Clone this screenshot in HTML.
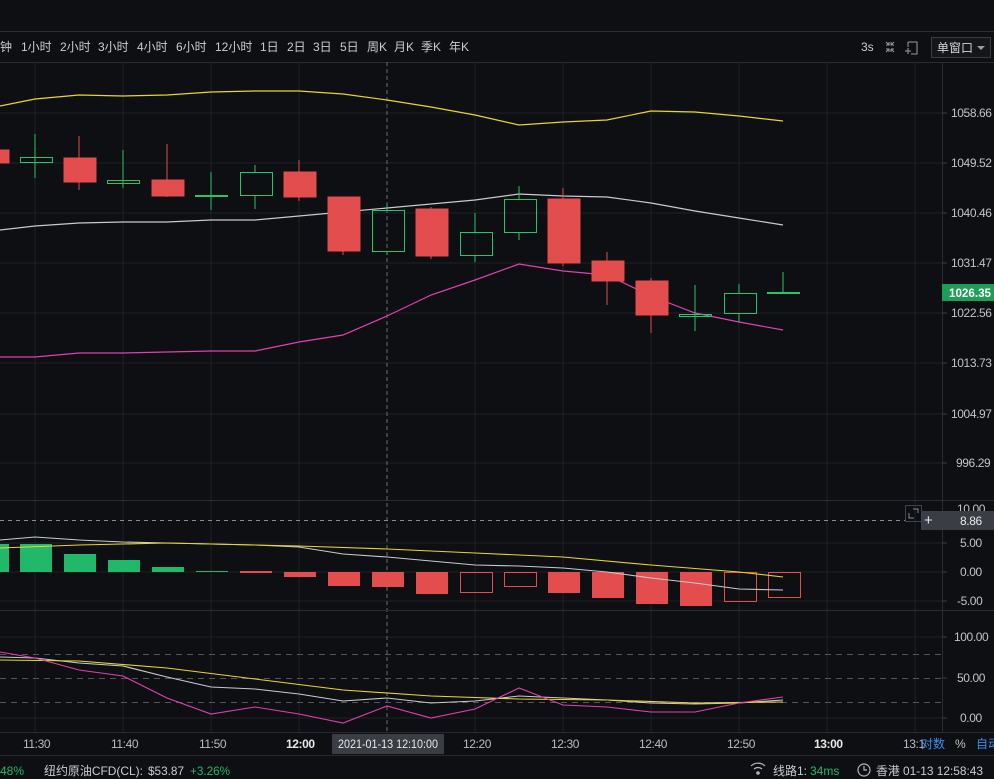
<!DOCTYPE html>
<html><head><meta charset="utf-8"><style>
body{margin:0;width:994px;height:779px;background:#0e0f12;overflow:hidden;font-family:"Liberation Sans","Noto Sans CJK SC",sans-serif;}
svg{position:absolute;left:0;top:0}
text{font-family:"Liberation Sans","Noto Sans CJK SC",sans-serif}
.ax text{letter-spacing:-0.4px}
</style></head><body>
<svg width="994" height="779" viewBox="0 0 994 779">
<rect width="994" height="779" fill="#0e0f12"/>
<line x1="0" y1="31.5" x2="994" y2="31.5" stroke="#2a2c31"/>
<line x1="0" y1="62.5" x2="994" y2="62.5" stroke="#2a2c31"/>
<g fill="#c9ccd1" font-size="12">
<text x="0" y="51">钟</text><text x="21" y="51">1小时</text><text x="60" y="51">2小时</text><text x="98" y="51">3小时</text><text x="137" y="51">4小时</text><text x="176" y="51">6小时</text><text x="215" y="51">12小时</text><text x="260" y="51">1日</text><text x="287" y="51">2日</text><text x="313" y="51">3日</text><text x="340" y="51">5日</text><text x="367" y="51">周K</text><text x="394" y="51">月K</text><text x="421" y="51">季K</text><text x="449" y="51">年K</text>
<text x="861" y="51">3s</text>
</g>
<g stroke="#9a9da3" fill="none" stroke-width="1">
<path d="M886 42l3 3M889 42v3h-3M894 42l-3 3M891 42v3h3M886 52l3-3M886 49h3v3M894 52l-3-3M891 49v3M891 49h3"/>
<path d="M908 42h9v12h-6M908 42v5M905 51h6M908 48v6"/>
</g>
<rect x="931.5" y="37.5" width="59" height="20" fill="#15161a" stroke="#3a3c42"/>
<text x="937" y="52" fill="#d4d6da" font-size="12">单窗口</text>
<path d="M977 46l4 4 4-4z" fill="#9a9da3"/>
<g stroke="#1e2025">
<path d="M35 62V732M123 62V732M211 62V732M299 62V732M475 62V732M563 62V732M651 62V732M739 62V732M827 62V732M915 62V732"/>
<path d="M0 113H942M0 163H942M0 213H942M0 263H942M0 313H942M0 363H942M0 414H942M0 463H942M0 543H942M0 572H942M0 601H942M0 637H942M0 718H942"/>
</g>
<line x1="387" y1="62" x2="387" y2="732" stroke="#6a6d73" stroke-dasharray="4,3"/>
<g stroke="#2a2c31"><path d="M0 500.5H994M0 610.5H994M0 732.5H994M0 755.5H994M942.5 62V732"/></g>
<g stroke="#555" stroke-dasharray="6,5"><path d="M0 654.5H942M0 678.5H942M0 702.5H942"/></g>
<line x1="0" y1="520.5" x2="905" y2="520.5" stroke="#8a8d93" stroke-dasharray="4,4"/>
<g fill="none" stroke-width="1.2">
<polyline stroke="#e8d62a" points="0,106 35,99 79,95 123,96 167,95 211,92 255,91 299,91 343,94 387,100 431,107 475,115 519,125 563,122 607,120 651,111 695,112 739,116 783,121"/>
<polyline stroke="#c9c9d0" points="0,230 35,226 79,223 123,222 167,222 211,220 255,220 299,216 343,212 387,208 431,204 475,200 519,194 563,196 607,197 651,203 695,211 739,218 783,225"/>
<polyline stroke="#e040b0" points="0,357 35,357 79,353 123,353 167,352 211,351 255,351 299,342 343,335 387,316 431,295 475,280 519,264 563,271 607,275 651,296 695,313 739,322 783,330"/>
</g>
<g fill="#e34d4d" stroke="#e34d4d">
<rect x="0" y="150" width="9" height="13"/>
<path d="M79 136V190M167 144V197M299 160V201M343 197V255M431 207V259M563 188V266M607 252V305M651 278V333"/>
<rect x="64" y="158" width="32" height="24"/><rect x="152" y="180" width="32" height="16"/><rect x="284" y="172" width="32" height="25"/><rect x="328" y="197" width="32" height="54"/><rect x="416" y="209" width="32" height="47"/><rect x="548" y="199" width="32" height="64"/><rect x="592" y="261" width="32" height="20"/><rect x="636" y="281" width="32" height="34"/>
</g>
<g fill="none" stroke="#27c46a">
<path d="M35 134V178M123 150V188M211 172V210M255 165V172M255 195V209M387 204V210M387 251V255M475 213V232M475 255V262M519 186V199M519 232V240M695 285V331M739 284V293M739 313V322M783 272V294"/>
<rect x="20.5" y="157.5" width="32" height="5"/><rect x="107.5" y="180.5" width="32" height="3"/><rect x="195.5" y="195.5" width="32" height="1"/><rect x="240.5" y="172.5" width="32" height="23"/><rect x="372.5" y="210.5" width="32" height="41"/><rect x="460.5" y="232.5" width="32" height="23"/><rect x="504.5" y="199.5" width="32" height="33"/><rect x="679.5" y="314.5" width="32" height="2"/><rect x="724.5" y="293.5" width="32" height="20"/><rect x="767.5" y="292.5" width="32" height="1"/>
</g>
<g fill="#22b86a"><rect x="0" y="544" width="9" height="28"/><rect x="20" y="544" width="32" height="28"/><rect x="64" y="554" width="32" height="18"/><rect x="108" y="560" width="32" height="12"/><rect x="152" y="567" width="32" height="5"/><rect x="196" y="571" width="32" height="1"/></g>
<g fill="#e34d4d"><rect x="240" y="571" width="32" height="2"/><rect x="284" y="572" width="32" height="5"/><rect x="328" y="572" width="32" height="14"/><rect x="372" y="572" width="32" height="15"/><rect x="416" y="572" width="32" height="22"/><rect x="548" y="572" width="32" height="21"/><rect x="592" y="572" width="32" height="26"/><rect x="636" y="572" width="32" height="32"/><rect x="680" y="572" width="32" height="34"/></g>
<g fill="none" stroke="#e34d4d"><rect x="460.5" y="572.5" width="32" height="20"/><rect x="504.5" y="572.5" width="32" height="14"/><rect x="724.5" y="572.5" width="32" height="29"/><rect x="768.5" y="572.5" width="32" height="25"/></g>
<g fill="none" stroke-width="1.1">
<polyline stroke="#c9c9d0" points="0,540 35,537 79,540 123,542 167,543 211,544 255,545 299,547 343,554 387,557 431,561 475,565 519,566 563,568 607,572 651,578 695,583 739,589 783,590"/>
<polyline stroke="#e8d62a" points="0,548 79,545 167,543 255,545 299,546 387,549 475,553 563,557 651,565 739,572 783,577"/>
<polyline stroke="#c9c9d0" points="0,657 35,658 79,663 123,666 167,677 211,687 255,689 299,694 343,701 387,698 431,703 475,701 519,696 563,698 607,700 651,703 695,704 739,703 783,700"/>
<polyline stroke="#e8d62a" points="0,660 79,661 167,668 255,679 343,690 431,696 519,699 607,700 695,703 783,702"/>
<polyline stroke="#e040b0" points="0,652 35,658 79,670 123,676 167,698 211,714 255,707 299,714 343,723 387,706 431,718 475,709 519,688 563,705 607,707 651,712 695,712 739,703 783,697"/>
</g>
<g class="ax" fill="#c0c3c8" font-size="12">
<text x="951" y="117">1058.66</text><text x="951" y="167">1049.52</text><text x="951" y="217">1040.46</text><text x="951" y="267">1031.47</text><text x="951" y="317">1022.56</text><text x="951" y="367">1013.73</text><text x="951" y="418">1004.97</text><text x="956" y="467">996.29</text>
<text x="957" y="513">10.00</text>
<text x="960" y="547">5.00</text><text x="960" y="576">0.00</text><text x="957" y="605">-5.00</text>
<text x="954" y="641">100.00</text><text x="957" y="682">50.00</text><text x="960" y="722">0.00</text>
</g>
<g stroke="#3a3c42"><path d="M942 113h5M942 163h5M942 213h5M942 263h5M942 313h5M942 363h5M942 414h5M942 463h5M942 543h5M942 572h5M942 601h5M942 637h5M942 678h5M942 718h5"/></g>
<rect x="942" y="284" width="52" height="17" fill="#1f9d57"/>
<text x="949" y="297" fill="#fff" font-size="12" font-weight="bold" textLength="42" lengthAdjust="spacingAndGlyphs">1026.35</text>
<rect x="921" y="511" width="73" height="19" fill="#3a3d44"/>
<text x="924" y="525" fill="#e8e8e8" font-size="15">+</text>
<text x="960" y="525" fill="#e8e8e8" font-size="12" letter-spacing="-0.4">8.86</text>
<rect x="905.5" y="505.5" width="16" height="16" fill="none" stroke="#3a4060"/>
<path d="M909 513v5h5M913 509h5v4" stroke="#888" fill="none"/>
<g class="ax" fill="#b8bbc0" font-size="12">
<text x="23" y="748">11:30</text><text x="111" y="748">11:40</text><text x="199" y="748">11:50</text><text x="286" y="748" font-weight="bold" fill="#e8e8e8">12:00</text><text x="463" y="748">12:20</text><text x="551" y="748">12:30</text><text x="639" y="748">12:40</text><text x="727" y="748">12:50</text><text x="814" y="748" font-weight="bold" fill="#e8e8e8">13:00</text><text x="903" y="748">13:1</text>
</g>
<rect x="332" y="734" width="112" height="20" fill="#3a3d44"/>
<text x="338" y="748" fill="#e8e8e8" font-size="12" textLength="100" lengthAdjust="spacingAndGlyphs">2021-01-13 12:10:00</text>
<text x="921" y="748" fill="#3b8ee8" font-size="12">对数</text>
<text x="955" y="748" fill="#c0c3c8" font-size="12">%</text>
<text x="976" y="748" fill="#3b8ee8" font-size="12">自动</text>
<g font-size="12">
<text x="0" y="775" fill="#22b86a">48%</text>
<text x="44" y="775" fill="#c9ccd1" textLength="99" lengthAdjust="spacingAndGlyphs">纽约原油CFD(CL):</text>
<text x="148" y="775" fill="#c9ccd1" textLength="36" lengthAdjust="spacingAndGlyphs">$53.87</text>
<text x="190" y="775" fill="#22b86a" textLength="40" lengthAdjust="spacingAndGlyphs">+3.26%</text>
<text x="773" y="775" fill="#c9ccd1">线路1:</text><text x="810" y="775" fill="#22b86a">34ms</text>
<text x="876" y="775" fill="#c9ccd1" textLength="107" lengthAdjust="spacingAndGlyphs">香港 01-13 12:58:43</text>
</g>
<g fill="none" stroke="#b0b3b8" stroke-width="1.2">
<path d="M751 766a10 10 0 0 1 14 0M754 769a6 6 0 0 1 8 0"/><circle cx="758" cy="773" r="1.2" fill="#b0b3b8"/>
<circle cx="864" cy="770" r="6"/><path d="M864 766v4h3"/>
</g>
</svg>
</body></html>
